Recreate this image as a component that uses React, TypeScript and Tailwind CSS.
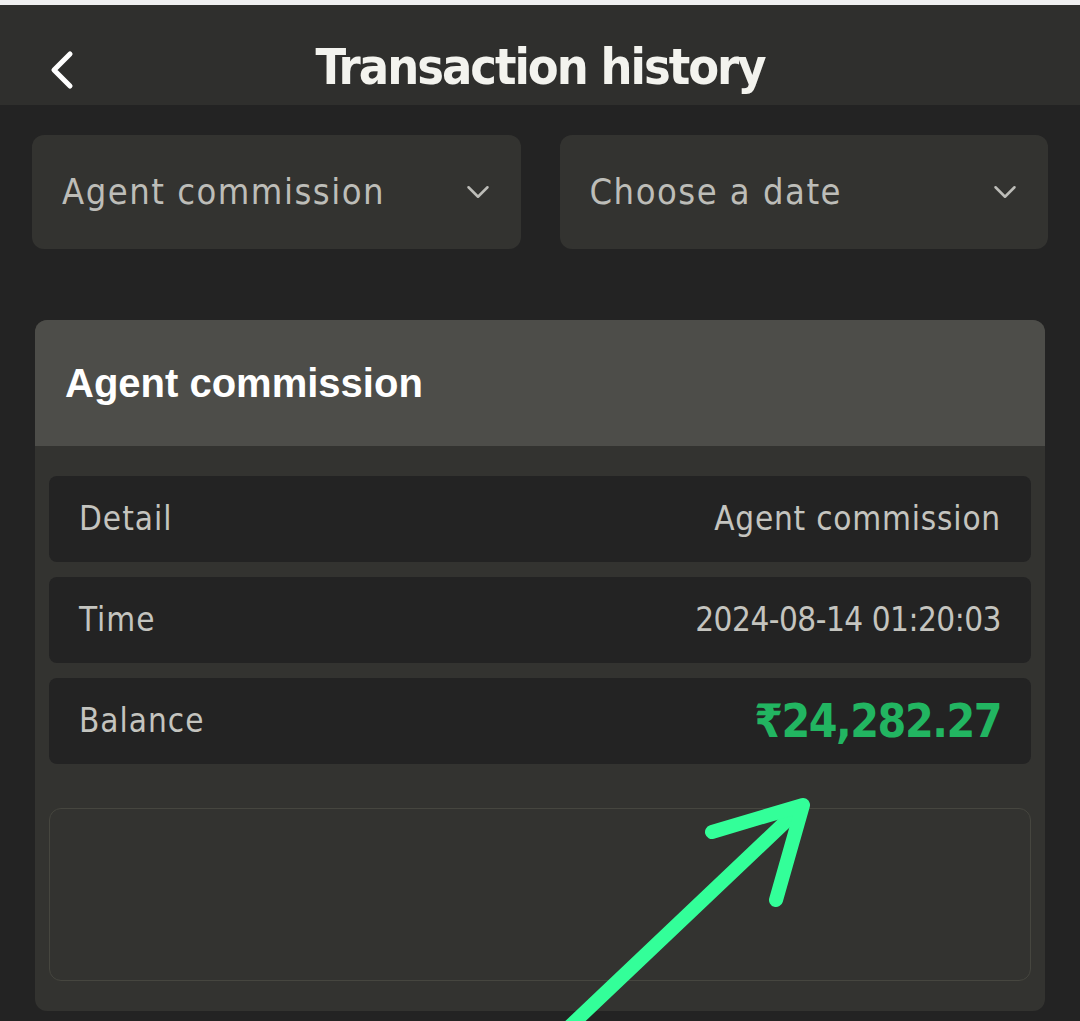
import { ChevronDown, ChevronLeft } from "lucide-react";

const rows = [
  { label: "Detail", value: "Agent commission", valueClass: "text-[33px] tracking-[0.8px] text-[#c4c4bf]" },
  { label: "Time", value: "2024-08-14 01:20:03", valueClass: "text-[33px] tracking-[-0.5px] text-[#c4c4bf]" },
  { label: "Balance", value: "₹24,282.27", valueClass: "text-[46px] font-bold tracking-[-1.5px] text-[#22b561]" },
];

const din = { fontFamily: '"DejaVu Sans Condensed", "DejaVu Sans", sans-serif' };

function Select({ label }: { label: string }) {
  return (
    <div className="flex h-[114px] flex-1 items-center justify-between rounded-xl bg-[#333330] pl-[30px] pr-[24px]">
      <span className="text-[36px] tracking-[1.5px] text-[#bdbdb8]">{label}</span>
      <ChevronDown className="size-[38px] text-[#bdbdb8]" strokeWidth={1.6} />
    </div>
  );
}

export default function App() {
  return (
    <div className="relative h-[1021px] w-[1080px] overflow-hidden bg-[#232323]" style={din}>
      <div className="h-[5px] bg-[#f0f0f0]" />
      <header className="relative flex h-[100px] items-center justify-center bg-[#2f2f2d] pt-[24px]">
        <ChevronLeft className="absolute left-[30px] top-[33px] size-[64px] text-white" strokeWidth={1.9} />
        <h1 className="text-[50px] font-bold tracking-[-2px] text-[#f3f3ee]">Transaction history</h1>
      </header>

      <div className="flex gap-[39px] px-[32px] pt-[30px]">
        <Select label="Agent commission" />
        <Select label="Choose a date" />
      </div>

      <section className="mx-[35px] mt-[71px] overflow-hidden rounded-xl bg-[#333330] pb-[30px]">
        <div className="flex h-[126px] items-center bg-[#4d4d49] px-[30px]">
          <h2
            className="text-[40px] font-bold text-white"
            style={{ fontFamily: '"Liberation Sans", Arial, sans-serif' }}
          >
            Agent commission
          </h2>
        </div>
        <div className="flex flex-col gap-[15px] px-[14px] pt-[30px]">
          {rows.map((r) => (
            <div
              key={r.label}
              className="flex h-[86px] items-center justify-between rounded-lg bg-[#232323] pl-[30px] pr-[30px]"
            >
              <span className="text-[33px] tracking-[1px] text-[#c4c4bf]">{r.label}</span>
              <span className={r.valueClass}>{r.value}</span>
            </div>
          ))}
          <div className="mt-[29px] h-[173px] rounded-xl border border-[#46463f] bg-[#333330]" />
        </div>
      </section>

      <svg
        className="pointer-events-none absolute left-0 top-0"
        width="1080"
        height="1021"
        viewBox="0 0 1080 1021"
      >
        <g stroke="#33ff99" strokeWidth="14" strokeLinecap="round" strokeLinejoin="round" fill="none">
          <path d="M566 1030 L800 808" />
          <path d="M712 832 L803 805 L776 900" />
        </g>
      </svg>
    </div>
  );
}
